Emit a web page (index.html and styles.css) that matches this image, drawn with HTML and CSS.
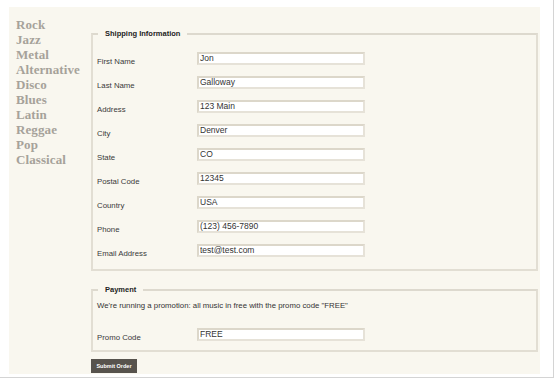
FILE: index.html
```html
<!DOCTYPE html>
<html lang="en">
<head>
  <meta charset="UTF-8" />
  <title>Checkout</title>
  <link rel="stylesheet" href="styles.css">
</head>
<body>
  <div class="frame">
    <div class="page">
      <ul class="genres">
        <li><a href="#">Rock</a></li>
        <li><a href="#">Jazz</a></li>
        <li><a href="#">Metal</a></li>
        <li><a href="#">Alternative</a></li>
        <li><a href="#">Disco</a></li>
        <li><a href="#">Blues</a></li>
        <li><a href="#">Latin</a></li>
        <li><a href="#">Reggae</a></li>
        <li><a href="#">Pop</a></li>
        <li><a href="#">Classical</a></li>
      </ul>

      <form class="checkout">
        <fieldset class="shipping">
          <legend>Shipping Information</legend>
          <div class="row"><label>First Name</label><input type="text" value="Jon"></div>
          <div class="row"><label>Last Name</label><input type="text" value="Galloway"></div>
          <div class="row"><label>Address</label><input type="text" value="123 Main"></div>
          <div class="row"><label>City</label><input type="text" value="Denver"></div>
          <div class="row"><label>State</label><input type="text" value="CO"></div>
          <div class="row"><label>Postal Code</label><input type="text" value="12345"></div>
          <div class="row"><label>Country</label><input type="text" value="USA"></div>
          <div class="row"><label>Phone</label><input type="text" value="(123) 456-7890"></div>
          <div class="row"><label>Email Address</label><input type="text" value="test@test.com"></div>
        </fieldset>

        <fieldset class="payment">
          <legend>Payment</legend>
          <p class="promo-note">We're running a promotion: all music in free with the promo code "FREE"</p>
          <div class="row"><label>Promo Code</label><input type="text" value="FREE"></div>
        </fieldset>

        <button type="submit" class="submit-btn">Submit Order</button>
      </form>
    </div>
  </div>
</body>
</html>
```

FILE: styles.css
```css
* {
  box-sizing: border-box;
  margin: 0;
  padding: 0;
}

body {
  background: #fff;
  font-family: "Liberation Sans", Arial, sans-serif;
}

.frame {
  width: 554px;
  height: 378px;
  border-right: 1px solid #d4d4d4;
  border-bottom: 1px solid #d4d4d4;
  padding: 7px 0 0 9px;
}

.page {
  width: 531px;
  height: 367px;
  background: #f9f7ef;
  display: flex;
}

.genres {
  list-style: none;
  width: 82px;
  flex-shrink: 0;
  padding: 10px 0 0 7px;
}

.genres li {
  font-family: "Liberation Serif", Georgia, serif;
  font-weight: bold;
  font-size: 13px;
  line-height: 15px;
  white-space: nowrap;
}

.genres a {
  color: #a6a29a;
  text-decoration: none;
  letter-spacing: 0.1px;
}

.checkout {
  width: 447px;
  flex-shrink: 0;
  padding-top: 21px;
}

fieldset {
  border: 2px solid #e2ded3;
  border-top-color: #ddd9ce;
  padding: 0 4px;
}

legend {
  font-size: 7.5px;
  font-weight: bold;
  color: #222;
  line-height: 12px;
  padding: 0 7px;
  margin-left: 1px;
}

.shipping {
  padding-top: 6px;
  padding-bottom: 7px;
}

.row {
  display: flex;
  align-items: center;
  height: 24px;
}

.row label {
  width: 100px;
  font-size: 7.8px;
  color: #3a3a3a;
  padding-top: 6px;
}

.row input {
  width: 168px;
  height: 13px;
  border: 2px solid #dcd7ca;
  border-right-color: #e6e2d8;
  border-bottom-color: #e6e2d8;
  background: #fff;
  font-family: "Liberation Sans", Arial, sans-serif;
  font-size: 8.5px;
  color: #333;
  padding: 0 1px;
  outline: none;
}

.payment {
  margin-top: 13px;
  padding-top: 5px;
  padding-bottom: 4px;
}

.promo-note {
  font-size: 7.8px;
  color: #333;
  line-height: 10px;
  margin-bottom: 11px;
}

.submit-btn {
  margin-top: 7px;
  width: 46px;
  height: 14px;
  border: none;
  background: #57534d;
  color: #fff;
  font-family: "Liberation Sans", Arial, sans-serif;
  font-size: 5.5px;
  font-weight: bold;
}
```
